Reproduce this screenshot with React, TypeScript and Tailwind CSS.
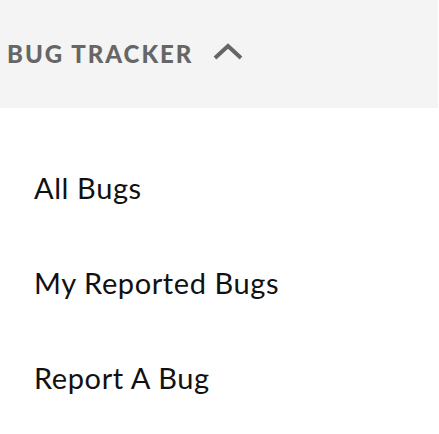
import React from "react";

export default function App() {
  const items = ["All Bugs", "My Reported Bugs", "Report A Bug"];
  return (
    <div className="w-[439px] h-[434px] bg-white" style={{ fontFamily: "Lato, 'Noto Sans', sans-serif" }}>
      <div className="h-[108px] w-[438px] bg-[#f4f4f4] flex items-center pl-[7px]">
        <span className="text-[24px] font-black text-[#666666] leading-none tracking-[2px]">BUG TRACKER</span>
        <svg width="30" height="18" viewBox="0 0 30 18" className="ml-[20px] -mt-[4px]">
          <polyline points="2,15 15,3 28,15" fill="none" stroke="#666666" strokeWidth="4" />
        </svg>
      </div>
      <div className="pt-[32px] pl-[34px] flex flex-col">
        {items.map((t) => (
          <div key={t} className="h-[95px] flex items-center text-[29px] text-[#111111] leading-none tracking-[0.6px]">
            {t}
          </div>
        ))}
      </div>
    </div>
  );
}
